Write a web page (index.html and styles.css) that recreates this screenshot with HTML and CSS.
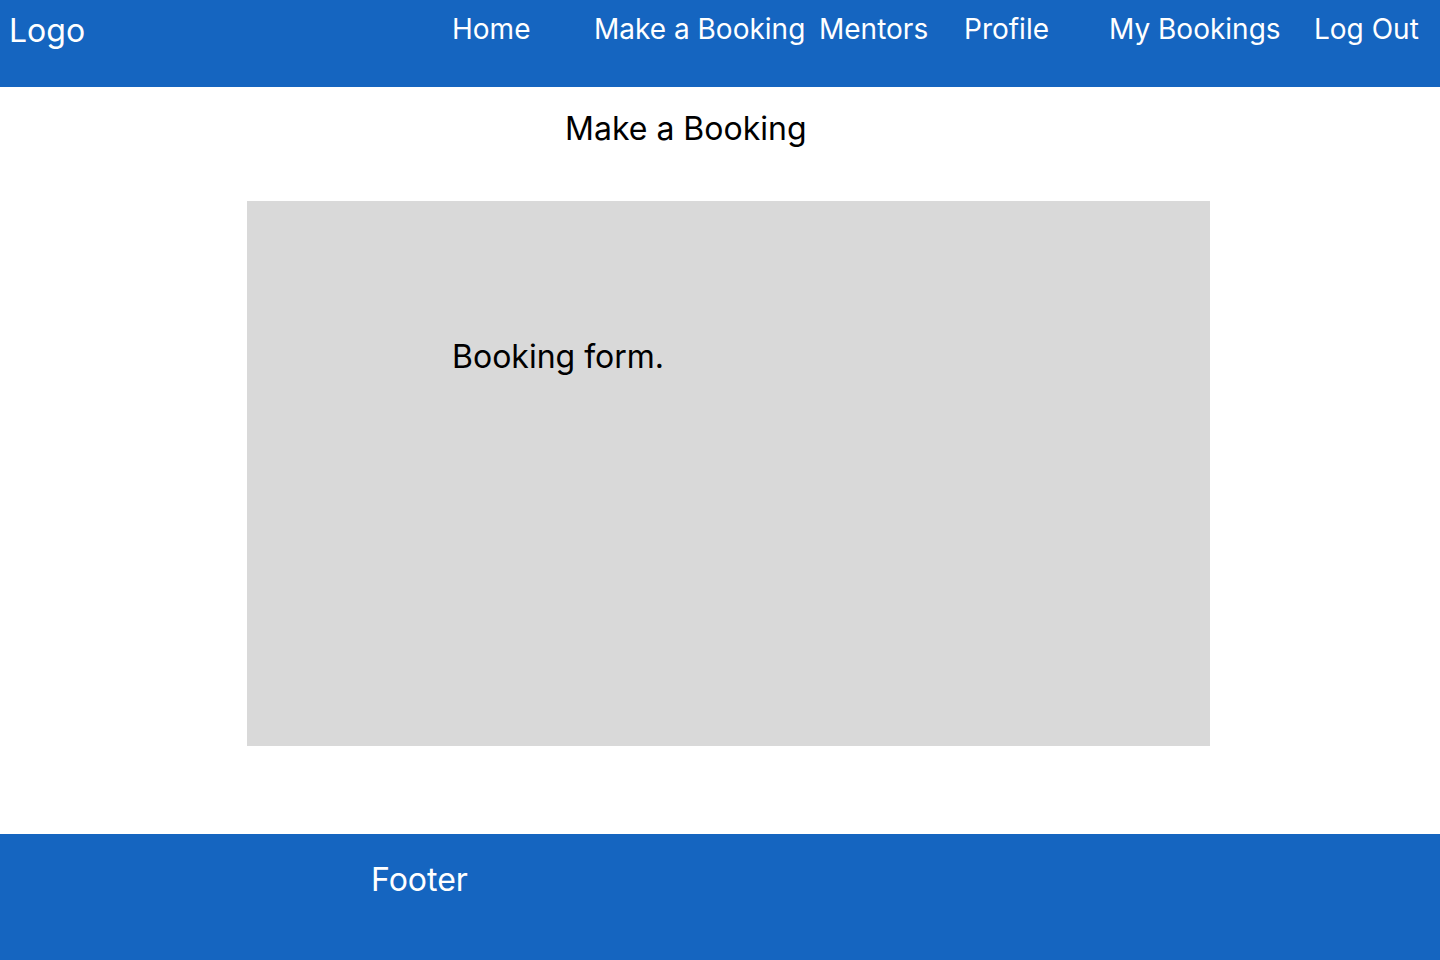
FILE: index.html
```html
<!DOCTYPE html>
<html lang="en">
<head>
<meta charset="utf-8">
<title>Make a Booking</title>
<link rel="stylesheet" href="styles.css">
</head>
<body>
<header class="topbar">
  <div class="logo">Logo</div>
  <nav class="nav">
    <a class="nav-link" href="#">Home</a>
    <a class="nav-link" href="#">Make a Booking</a>
    <a class="nav-link" href="#">Mentors</a>
    <a class="nav-link" href="#">Profile</a>
    <a class="nav-link" href="#">My Bookings</a>
    <a class="nav-link" href="#">Log Out</a>
  </nav>
</header>
<main class="content">
  <h1 class="page-title">Make a Booking</h1>
  <section class="form-box">
    <p class="form-label">Booking form.</p>
  </section>
</main>
<footer class="footer">
  <p class="footer-text">Footer</p>
</footer>
</body>
</html>
```

FILE: styles.css
```css
* { box-sizing: border-box; }

html, body {
  margin: 0;
  padding: 0;
  background: #ffffff;
  font-family: Inter, "Noto Sans", "Liberation Sans", sans-serif;
}

.topbar {
  height: 87px;
  background: #1565c0;
  display: flex;
  align-items: flex-start;
  color: #ffffff;
}

.logo {
  font-size: 32px;
  line-height: 39px;
  padding: 11px 0 0 9px;
  width: 452px;
  flex: none;
}

.nav {
  display: grid;
  grid-template-columns: 142px 225px 145px 145px 205px auto;
  padding-top: 12px;
}

.nav-link {
  color: #ffffff;
  text-decoration: none;
  font-size: 28px;
  line-height: 34px;
  white-space: nowrap;
}

.content {
  padding: 22px 0 88px 0;
}

.page-title {
  margin: 0 0 53px 565px;
  font-size: 32px;
  line-height: 39px;
  font-weight: 400;
  color: #000000;
}

.form-box {
  margin-left: 247px;
  width: 963px;
  height: 545px;
  background: #d9d9d9;
  padding: 136px 0 0 205px;
}

.form-label {
  margin: 0;
  font-size: 32px;
  line-height: 39px;
  color: #000000;
}

.footer {
  height: 126px;
  background: #1565c0;
  padding: 26px 0 0 371px;
}

.footer-text {
  margin: 0;
  color: #ffffff;
  font-size: 32px;
  line-height: 39px;
}
```
